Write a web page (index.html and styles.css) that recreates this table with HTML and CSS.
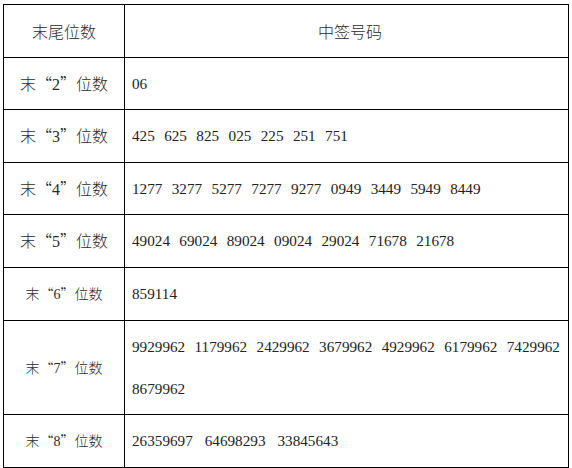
FILE: index.html
```html
<!DOCTYPE html>
<html lang="zh-CN">
<head>
<meta charset="utf-8">
<link rel="stylesheet" href="styles.css">
</head>
<body>
<table class="lottery">
  <tr>
    <th class="label head">末尾位数</th>
    <th class="head">中签号码</th>
  </tr>
  <tr>
    <td class="label">末<span class="q">“</span>2<span class="q">”</span>位数</td>
    <td class="nums">06</td>
  </tr>
  <tr>
    <td class="label">末<span class="q">“</span>3<span class="q">”</span>位数</td>
    <td class="nums">425 625 825 025 225 251 751</td>
  </tr>
  <tr>
    <td class="label">末<span class="q">“</span>4<span class="q">”</span>位数</td>
    <td class="nums">1277 3277 5277 7277 9277 0949 3449 5949 8449</td>
  </tr>
  <tr>
    <td class="label">末<span class="q">“</span>5<span class="q">”</span>位数</td>
    <td class="nums">49024 69024 89024 09024 29024 71678 21678</td>
  </tr>
  <tr>
    <td class="label small">末<span class="q">“</span>6<span class="q">”</span>位数</td>
    <td class="nums">859114</td>
  </tr>
  <tr>
    <td class="label small">末<span class="q">“</span>7<span class="q">”</span>位数</td>
    <td class="nums">9929962 1179962 2429962 3679962 4929962 6179962 7429962 8679962</td>
  </tr>
  <tr>
    <td class="label small">末<span class="q">“</span>8<span class="q">”</span>位数</td>
    <td class="nums wide">26359697 64698293 33845643</td>
  </tr>
</table>
</body>
</html>
```
FILE: styles.css
```css
html, body {
  margin: 0;
  padding: 0;
  background: #ffffff;
}

body {
  padding: 4px 0 0 3px;
}

.lottery {
  border-collapse: collapse;
  table-layout: fixed;
  width: 566px;
  color: #222222;
  font-family: "Liberation Serif", "Noto Sans CJK SC", serif;
  font-weight: normal;
}

.lottery th,
.lottery td {
  border: 1px solid #000000;
  padding: 5px 0 4.6px 7px;
  line-height: 20px;
  font-weight: normal;
  vertical-align: middle;
}

.lottery .label {
  width: 120px;
  padding-left: 0;
  padding-right: 0;
  text-align: center;
  font-size: 16px;
  font-weight: 300;
  color: #2a2a2a;
  font-family: "Liberation Serif", "Noto Sans CJK SC", serif;
  white-space: nowrap;
}

.lottery .label.small {
  font-size: 14px;
}

.q {
  font-family: "Noto Sans CJK SC", sans-serif;
}

.lottery .head {
  text-align: center;
  font-size: 16px;
  font-weight: 300;
  color: #2a2a2a;
  font-family: "Noto Sans CJK SC", sans-serif;
  padding-top: 16px;
  padding-bottom: 15.6px;
}

.lottery .nums {
  text-align: left;
  font-size: 15.2px;
  line-height: 42px;
  word-spacing: 5.6px;
}

.lottery .nums.wide {
  word-spacing: 8.2px;
}
```
